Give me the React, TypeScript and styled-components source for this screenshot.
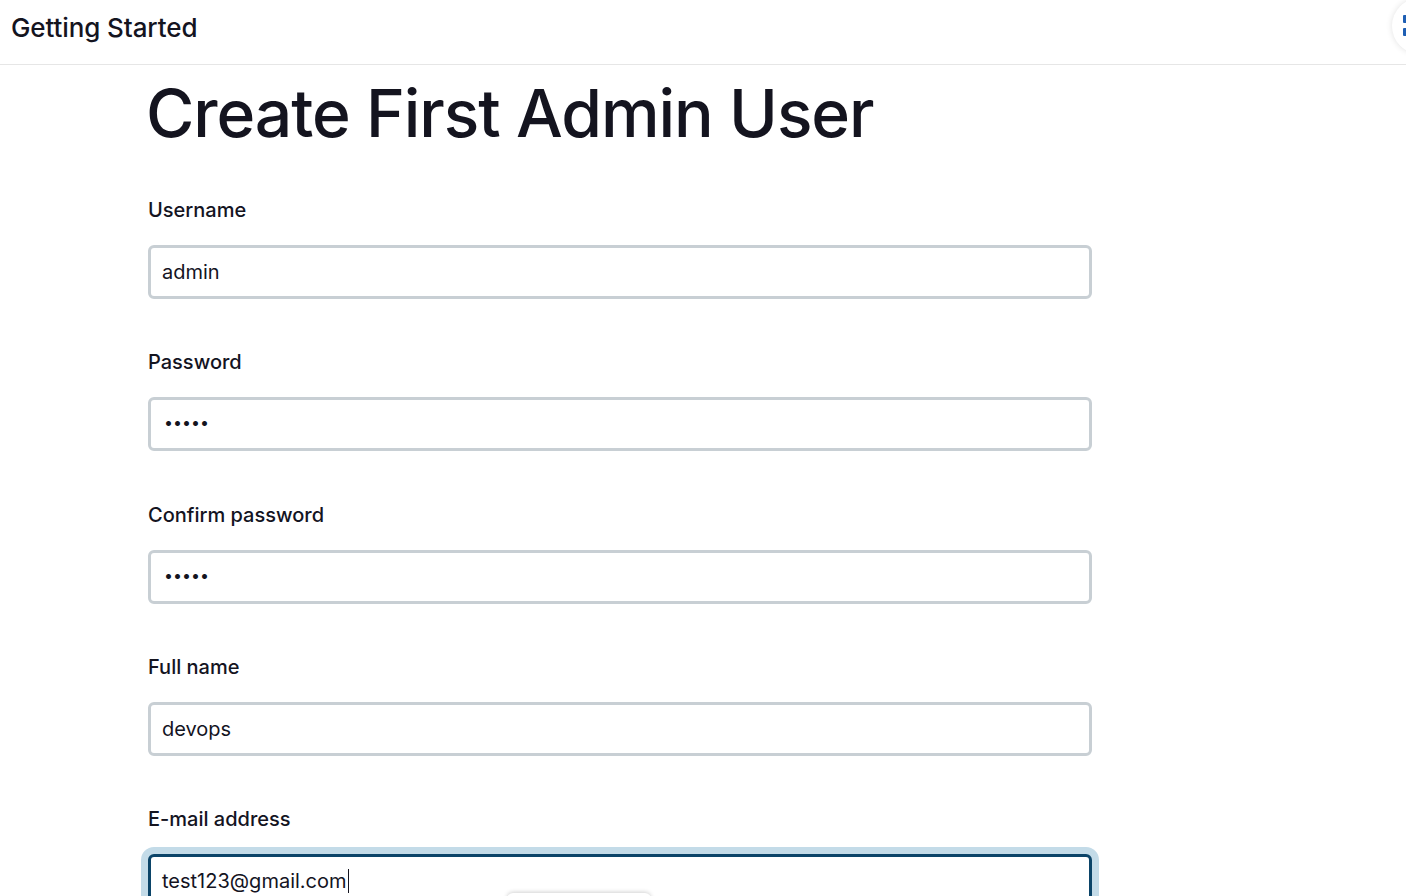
import styled, { createGlobalStyle } from 'styled-components';

const GlobalStyle = createGlobalStyle`
  html, body {
    margin: 0;
    padding: 0;
    background: #ffffff;
    overflow: hidden;
  }
  body {
    font-family: Inter, "Noto Sans", "Liberation Sans", sans-serif;
    color: #14141f;
  }
`;

const Page = styled.div`
  position: relative;
  width: 1406px;
  height: 896px;
  overflow: hidden;
`;

// 上部のヘッダー
const Header = styled.header`
  display: flex;
  align-items: center;
  height: 65px;
  padding: 0 11px;
  border-bottom: 1px solid #e6e6e6;
  box-sizing: border-box;
`;

const HeaderTitle = styled.div`
  font-size: 26px;
  font-weight: 500;
  letter-spacing: -0.1px;
  margin-top: -9px;
`;

// 右上の丸いボタン
const FloatButton = styled.div`
  position: absolute;
  top: -2px;
  left: 1392px;
  width: 56px;
  height: 56px;
  border-radius: 50%;
  background: #ffffff;
  box-shadow: 0 0 6px rgba(0, 0, 0, 0.12);
`;

const FloatMark = styled.span<{ $top: number }>`
  position: absolute;
  left: 11px;
  top: ${(p) => p.$top}px;
  width: 4px;
  height: 8px;
  border-radius: 1px;
  background: #1f5fb4;
`;

const Content = styled.main`
  padding: 0 0 0 148px;
  width: 944px;
`;

const Title = styled.h1`
  margin: 8px 0 0 -2px;
  font-size: 66px;
  font-weight: 500;
  letter-spacing: -1.1px;
  line-height: 80px;
`;

const Form = styled.form`
  display: flex;
  flex-direction: column;
  margin-top: 45px;
`;

const Field = styled.div`
  display: flex;
  flex-direction: column;
  margin-bottom: 51.25px;
`;

const Label = styled.label`
  font-size: 20px;
  font-weight: 500;
  line-height: 24px;
  margin-bottom: 23px;
`;

const Input = styled.div<{ $focused?: boolean }>`
  position: relative;
  display: flex;
  align-items: center;
  height: 54px;
  box-sizing: border-box;
  padding: 0 11px;
  border-radius: 6px;
  border: 3px solid ${(p) => (p.$focused ? '#0b4468' : '#c8cfd4')};
  box-shadow: ${(p) => (p.$focused ? '0 0 0 7px #c3dbe8' : 'none')};
  font-size: 20px;
  background: #ffffff;
`;

const Dots = styled.span`
  font-size: 16px;
  letter-spacing: 0;
  margin-top: -4px;
  margin-left: 2px;
`;

const Caret = styled.span`
  display: inline-block;
  width: 1px;
  height: 24px;
  background: #14141f;
  margin-left: 1px;
`;

// オートフィルのポップアップの上端
const Suggest = styled.div`
  position: absolute;
  left: 507px;
  top: 893px;
  width: 144px;
  height: 30px;
  border-radius: 6px;
  background: #ffffff;
  box-shadow: 0 -1px 4px rgba(0, 0, 0, 0.18);
`;

type FieldType = {
  label: string;
  value: string;
  secret?: boolean;
  focused?: boolean;
};

const fields: FieldType[] = [
  { label: 'Username', value: 'admin' },
  { label: 'Password', value: '•••••', secret: true },
  { label: 'Confirm password', value: '•••••', secret: true },
  { label: 'Full name', value: 'devops' },
  { label: 'E-mail address', value: 'test123@gmail.com', focused: true },
];

export default function App() {
  return (
    <Page>
      <GlobalStyle />
      <Header>
        <HeaderTitle>Getting Started</HeaderTitle>
      </Header>
      <FloatButton>
        <FloatMark $top={17} />
        <FloatMark $top={30} />
      </FloatButton>
      <Content>
        <Title>Create First Admin User</Title>
        <Form>
          {fields.map((f) => (
            <Field key={f.label}>
              <Label>{f.label}</Label>
              <Input $focused={f.focused}>
                {f.secret ? <Dots>{f.value}</Dots> : <span>{f.value}</span>}
                {f.focused && <Caret />}
              </Input>
            </Field>
          ))}
        </Form>
      </Content>
      <Suggest />
    </Page>
  );
}
